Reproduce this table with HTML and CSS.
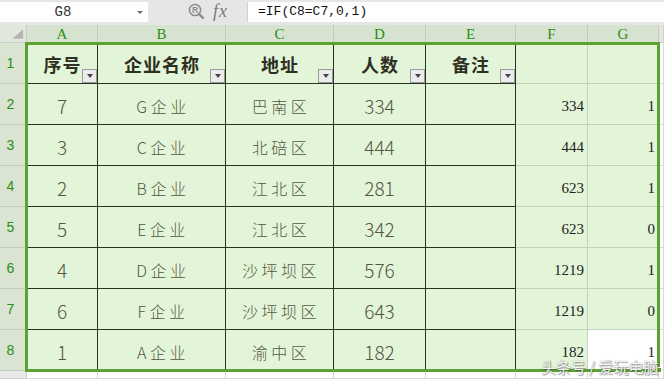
FILE: index.html
```html
<!DOCTYPE html>
<html lang="zh-CN">
<head>
<meta charset="utf-8">
<title>WPS 表格</title>
<link rel="stylesheet" href="styles.css">
</head>
<body>
<div class="app">
  <div class="bar">
    <div class="namebox"><span class="name">G8</span><span class="caret"></span></div>
    <div class="tools">
      <svg class="zoom-ico" width="17" height="17" viewBox="0 0 17 17">
        <circle cx="7" cy="7" r="5.6" fill="none" stroke="#8c8c8c" stroke-width="1.5"/>
        <text x="7" y="10" font-size="8.5" text-anchor="middle" fill="#8c8c8c" font-family="Liberation Sans, sans-serif" font-weight="bold">R</text>
        <line x1="11.2" y1="11.2" x2="15" y2="15" stroke="#8c8c8c" stroke-width="2.4" stroke-linecap="round"/>
      </svg>
      <span class="fx">fx</span>
    </div>
    <div class="formula">=IF(C8=C7,0,1)</div>
  </div>

  <div class="sheet">
    <!-- column headers -->
    <div class="c corner"><svg width="27" height="18" viewBox="0 0 27 18"><polygon points="13,14 24,14 24,4" fill="#b4b4b4"/></svg></div>
    <div class="c ch">A</div>
    <div class="c ch">B</div>
    <div class="c ch">C</div>
    <div class="c ch">D</div>
    <div class="c ch">E</div>
    <div class="c ch">F</div>
    <div class="c ch">G</div>
    <div class="c chx"></div>

    <!-- row 1 -->
    <div class="c rh">1</div>
    <div class="c t hd">序号<span class="flt"></span></div>
    <div class="c t hd">企业名称<span class="flt"></span></div>
    <div class="c t hd">地址<span class="flt"></span></div>
    <div class="c t hd">人数<span class="flt"></span></div>
    <div class="c t hd">备注<span class="flt"></span></div>
    <div class="c g"></div>
    <div class="c g"></div>
    <div class="c w"></div>

    <!-- row 2 -->
    <div class="c rh">2</div>
    <div class="c t num">7</div>
    <div class="c t dt">G企业</div>
    <div class="c t dt">巴南区</div>
    <div class="c t num">334</div>
    <div class="c t"></div>
    <div class="c g rn">334</div>
    <div class="c g rn">1</div>
    <div class="c w"></div>

    <!-- row 3 -->
    <div class="c rh">3</div>
    <div class="c t num">3</div>
    <div class="c t dt">C企业</div>
    <div class="c t dt">北碚区</div>
    <div class="c t num">444</div>
    <div class="c t"></div>
    <div class="c g rn">444</div>
    <div class="c g rn">1</div>
    <div class="c w"></div>

    <!-- row 4 -->
    <div class="c rh">4</div>
    <div class="c t num">2</div>
    <div class="c t dt">B企业</div>
    <div class="c t dt">江北区</div>
    <div class="c t num">281</div>
    <div class="c t"></div>
    <div class="c g rn">623</div>
    <div class="c g rn">1</div>
    <div class="c w"></div>

    <!-- row 5 -->
    <div class="c rh">5</div>
    <div class="c t num">5</div>
    <div class="c t dt">E企业</div>
    <div class="c t dt">江北区</div>
    <div class="c t num">342</div>
    <div class="c t"></div>
    <div class="c g rn">623</div>
    <div class="c g rn">0</div>
    <div class="c w"></div>

    <!-- row 6 -->
    <div class="c rh">6</div>
    <div class="c t num">4</div>
    <div class="c t dt">D企业</div>
    <div class="c t dt">沙坪坝区</div>
    <div class="c t num">576</div>
    <div class="c t"></div>
    <div class="c g rn">1219</div>
    <div class="c g rn">1</div>
    <div class="c w"></div>

    <!-- row 7 -->
    <div class="c rh">7</div>
    <div class="c t num">6</div>
    <div class="c t dt">F企业</div>
    <div class="c t dt">沙坪坝区</div>
    <div class="c t num">643</div>
    <div class="c t"></div>
    <div class="c g rn">1219</div>
    <div class="c g rn">0</div>
    <div class="c w"></div>

    <!-- row 8 -->
    <div class="c rh">8</div>
    <div class="c t num">1</div>
    <div class="c t dt">A企业</div>
    <div class="c t dt">渝中区</div>
    <div class="c t num">182</div>
    <div class="c t"></div>
    <div class="c g rn">182</div>
    <div class="c g rn active">1</div>
    <div class="c w"></div>

    <!-- row 9 (partial) -->
    <div class="c rhx"></div>
    <div class="c w"></div>
    <div class="c w"></div>
    <div class="c w"></div>
    <div class="c w"></div>
    <div class="c w"></div>
    <div class="c w"></div>
    <div class="c w"></div>
    <div class="c w"></div>

    <div class="sel"></div>
    <div class="handle"></div>
  </div>

  <div class="watermark">头条号 / 爱玩电脑</div>
</div>
</body>
</html>
```

FILE: styles.css
```css
* { box-sizing: border-box; }

html, body {
  margin: 0;
  padding: 0;
  width: 664px;
  height: 379px;
  overflow: hidden;
  background: #ffffff;
}

.app {
  position: relative;
  width: 664px;
  height: 379px;
  font-family: "Noto Sans CJK SC", "Liberation Sans", sans-serif;
}

/* ---------- formula bar ---------- */
.bar {
  display: flex;
  height: 25px;
  padding: 2px 0 3px 0;
  background: #e6e6e6;
}

.namebox {
  display: flex;
  align-items: center;
  width: 148px;
  background: #ffffff;
}

.name {
  flex: 1;
  text-align: center;
  padding-right: 6px;
  font-family: "Liberation Mono", monospace;
  font-size: 14px;
  color: #333333;
}

.caret {
  width: 0;
  height: 0;
  margin: 1px 5px 0 5px;
  border-left: 3.5px solid transparent;
  border-right: 3.5px solid transparent;
  border-top: 3.5px solid #6a6a6a;
}

.tools {
  display: flex;
  align-items: center;
  width: 99px;
  padding-left: 40px;
  gap: 8px;
}

.zoom-ico { display: block; margin-top: -2px; }

.fx {
  font-family: "Liberation Serif", serif;
  font-style: italic;
  font-size: 18px;
  color: #7a7a7a;
  letter-spacing: 1px;
  margin-top: -2px;
}

.formula {
  flex: 1;
  background: #ffffff;
  border-left: 1px solid #cfcfcf;
  padding-left: 10px;
  font-family: "Liberation Mono", monospace;
  font-size: 13px;
  line-height: 20px;
  color: #111111;
}

/* ---------- sheet grid ---------- */
.sheet {
  position: relative;
  display: grid;
  grid-template-columns: 27px 71px 128px 108px 92px 90px 72px 71px 1fr;
  grid-template-rows: 18px repeat(8, 41px) 1fr;
  height: 354px;
}

.c {
  display: flex;
  align-items: center;
  justify-content: center;
  position: relative;
  border-right: 1px solid #dadada;
  border-bottom: 1px solid #dadada;
  min-width: 0;
}

.corner {
  background: #e0e7dc;
  border-color: #c6cfc2;
  padding: 0;
}
.corner svg { display: block; }

.ch {
  background: #d7e3d1;
  border-color: #c0ccba;
  color: #2b8e10;
  font-family: "Liberation Serif", serif;
  font-size: 15px;
  padding-top: 2px;
}

.chx {
  background: #e4e4e4;
  border-color: #cfcfcf;
}

.rh {
  background: #d9e4d3;
  border-color: #c3cdbf;
  color: #2b8e10;
  font-family: "Liberation Sans", sans-serif;
  font-size: 14px;
  padding-right: 5px;
}

.rhx {
  background: #e8e8e8;
  border-color: #d2d2d2;
}

.t {
  background: #e3f5d8;
  border-color: #26331d;
}

.g {
  background: #e3f5d8;
  border-color: #c4d3bb;
}

.w {
  background: #ffffff;
  border-color: #d8d8d8;
}

.hd {
  font-weight: 700;
  font-size: 18px;
  color: #2f2f22;
  letter-spacing: 1px;
  padding: 2px 0 0 1px;
}

.dt {
  font-weight: 300;
  font-size: 16px;
  color: #555543;
  letter-spacing: 3.5px;
  padding: 3px 0 0 3px;
}

.num {
  font-weight: 300;
  font-size: 19px;
  color: #555543;
  padding-top: 2px;
}

.rn {
  justify-content: flex-end;
  align-items: flex-start;
  padding: 14px 3px 0 0;
  font-family: "Liberation Serif", serif;
  font-size: 15px;
  line-height: 16px;
  color: #222222;
}

.active { background: #ffffff; }

/* filter drop-down button */
.flt {
  position: absolute;
  right: 0;
  bottom: 0;
  width: 15px;
  height: 14px;
  border: 1px solid #9a9a9a;
  background: #ececec;
  display: flex;
  align-items: center;
  justify-content: center;
}
.flt::after {
  content: "";
  width: 0;
  height: 0;
  border-left: 3.5px solid transparent;
  border-right: 3.5px solid transparent;
  border-top: 4px solid #454545;
}

/* selection outline */
.sel {
  position: absolute;
  left: 25px;
  top: 17px;
  width: 635px;
  height: 330px;
  border: 3px solid #5ba232;
  pointer-events: none;
}

.handle {
  position: absolute;
  left: 656px;
  top: 342px;
  width: 6px;
  height: 6px;
  background: #5ba232;
  border: 1px solid #ffffff;
}

/* watermark */
.watermark {
  position: absolute;
  left: 541px;
  top: 359px;
  font-size: 15px;
  line-height: 15px;
  color: rgba(255, 255, 255, 0.92);
  text-shadow: 0 0 1px #6e6e6e, 1px 1px 1px rgba(0, 0, 0, 0.35);
  white-space: nowrap;
}
```
